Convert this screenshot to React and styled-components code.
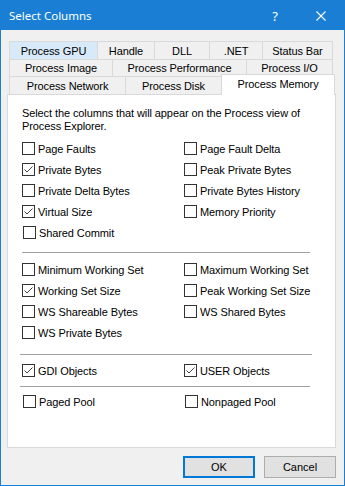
import styled, { createGlobalStyle } from "styled-components";

const GlobalStyle = createGlobalStyle`
  html, body {
    margin: 0;
    padding: 0;
    background: #ffffff;
  }
  * {
    box-sizing: border-box;
  }
`;

const Window = styled.div`
  width: 345px;
  height: 486px;
  border: 1px solid #1a7fd4;
  background: #f0f0f0;
  display: flex;
  flex-direction: column;
  font-family: "Liberation Sans", Arial, sans-serif;
  font-size: 11px;
  letter-spacing: -0.1px;
  color: #000;
`;

const TitleBar = styled.div`
  height: 29px;
  background: #1a7fd4;
  color: #fff;
  display: flex;
  align-items: center;
  padding-left: 8px;
  letter-spacing: 0;
`;

const Title = styled.div`
  font-family: "Noto Sans", "Liberation Sans", sans-serif;
  font-size: 11.5px;
  flex: 1;
`;

const TitleButton = styled.div`
  width: 46px;
  height: 29px;
  display: flex;
  align-items: center;
  justify-content: center;
  font-family: "Noto Sans", sans-serif;
  font-size: 13px;
`;

const Body = styled.div`
  flex: 1;
  display: flex;
  flex-direction: column;
  padding-top: 11px;
`;

const TabStrip = styled.div`
  display: flex;
  flex-direction: column;
  padding-left: 8px;
`;

const TabRow = styled.div`
  display: flex;
  height: ${(p) => p.h}px;
`;

const Tab = styled.div`
  width: ${(p) => p.w}px;
  height: 100%;
  border-top: 1px solid #d9d9d9;
  border-left: 1px solid #d9d9d9;
  border-right: ${(p) => (p.last ? "1px solid #d9d9d9" : "none")};
  background: ${(p) => (p.hover ? "#d8eaf9" : "#f0f0f0")};
  display: flex;
  align-items: center;
  justify-content: center;
  white-space: nowrap;
`;

const ActiveTab = styled.div`
  width: ${(p) => p.w}px;
  height: 21px;
  margin-top: -2px;
  margin-bottom: -1px;
  position: relative;
  z-index: 1;
  background: #fff;
  border: 1px solid #d9d9d9;
  border-bottom: none;
  display: flex;
  align-items: flex-start;
  justify-content: center;
  padding-top: 3px;
  white-space: nowrap;
`;

const Panel = styled.div`
  margin-left: 6px;
  width: 329px;
  height: 354px;
  background: #fff;
  border: 1px solid #d9d9d9;
  padding: 12px 0 0 14px;
  display: flex;
  flex-direction: column;
`;

const Intro = styled.p`
  margin: 0;
  line-height: 13px;
  width: 290px;
`;

const Grid = styled.div`
  display: grid;
  grid-template-columns: 162px 1fr;
  grid-auto-rows: 21px;
  margin-top: ${(p) => p.mt || 0}px;
`;

const Item = styled.label`
  display: flex;
  align-items: center;
  gap: 3px;
  padding-left: ${(p) => (p.nudge ? 1 : 0)}px;
  white-space: nowrap;
`;

const Box = styled.span`
  width: 13px;
  height: 13px;
  border: 1px solid #333;
  background: #fff;
  display: inline-flex;
  align-items: center;
  justify-content: center;
  flex-shrink: 0;
`;

const Separator = styled.div`
  height: 1px;
  background: #a0a0a0;
  margin: ${(p) => p.mt}px 0 ${(p) => p.mb}px ${(p) => p.ml}px;
  width: ${(p) => p.w}px;
`;

const Footer = styled.div`
  display: flex;
  justify-content: flex-end;
  gap: 9px;
  padding: 8px 8px 0 0;
`;

const Button = styled.button`
  width: 72px;
  height: 22px;
  font-family: "Liberation Sans", Arial, sans-serif;
  font-size: 11px;
  color: #000;
  background: #e1e1e1;
  border: ${(p) => (p.primary ? "2px solid #0078d7" : "1px solid #adadad")};
  padding: 0;
  display: flex;
  align-items: center;
  justify-content: center;
`;

function Check({ on, nudge, children }) {
  return (
    <Item nudge={nudge}>
      <Box>
        {on && (
          <svg width="11" height="11" viewBox="0 0 11 11">
            <polyline
              points="1.5,5.5 4,8 9.5,2.5"
              fill="none"
              stroke="#444"
              strokeWidth="1"
            />
          </svg>
        )}
      </Box>
      <span>{children}</span>
    </Item>
  );
}

export default function App() {
  return (
    <>
      <GlobalStyle />
      <Window>
        <TitleBar>
          <Title>Select Columns</Title>
          <TitleButton>?</TitleButton>
          <TitleButton>
            <svg width="10" height="10" viewBox="0 0 10 10">
              <path d="M0.5 0.5 L9.5 9.5 M9.5 0.5 L0.5 9.5" stroke="#fff" strokeWidth="1.1" />
            </svg>
          </TitleButton>
        </TitleBar>
        <Body>
          <TabStrip>
            <TabRow h={18}>
              <Tab w={88} hover>Process GPU</Tab>
              <Tab w={57}>Handle</Tab>
              <Tab w={55}>DLL</Tab>
              <Tab w={53}>.NET</Tab>
              <Tab w={71} last>Status Bar</Tab>
            </TabRow>
            <TabRow h={17}>
              <Tab w={103}>Process Image</Tab>
              <Tab w={134}>Process Performance</Tab>
              <Tab w={87} last>Process I/O</Tab>
            </TabRow>
            <TabRow h={18}>
              <Tab w={116}>Process Network</Tab>
              <Tab w={96}>Process Disk</Tab>
              <ActiveTab w={114}>Process Memory</ActiveTab>
            </TabRow>
          </TabStrip>
          <Panel>
            <Intro>
              Select the columns that will appear on the Process view of Process
              Explorer.
            </Intro>
            <Grid mt={5}>
              <Check>Page Faults</Check>
              <Check>Page Fault Delta</Check>
              <Check on>Private Bytes</Check>
              <Check>Peak Private Bytes</Check>
              <Check>Private Delta Bytes</Check>
              <Check>Private Bytes History</Check>
              <Check on>Virtual Size</Check>
              <Check>Memory Priority</Check>
              <Check nudge>Shared Commit</Check>
            </Grid>
            <Separator mt={9} mb={6} ml={0} w={288} />
            <Grid>
              <Check>Minimum Working Set</Check>
              <Check>Maximum Working Set</Check>
              <Check on>Working Set Size</Check>
              <Check>Peak Working Set Size</Check>
              <Check>WS Shareable Bytes</Check>
              <Check>WS Shared Bytes</Check>
              <Check>WS Private Bytes</Check>
            </Grid>
            <Separator mt={11} mb={5} ml={-2} w={292} />
            <Grid>
              <Check on>GDI Objects</Check>
              <Check on>USER Objects</Check>
            </Grid>
            <Separator mt={5} mb={4} ml={-2} w={290} />
            <Grid>
              <Check nudge>Paged Pool</Check>
              <Check nudge>Nonpaged Pool</Check>
            </Grid>
          </Panel>
          <Footer>
            <Button primary>OK</Button>
            <Button>Cancel</Button>
          </Footer>
        </Body>
      </Window>
    </>
  );
}
